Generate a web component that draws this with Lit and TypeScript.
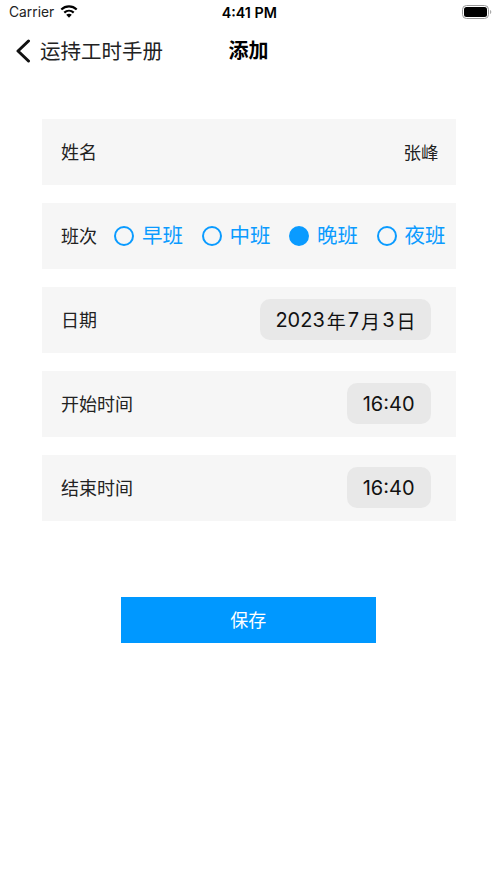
import { LitElement, html, css } from "lit";
import { customElement } from "lit/decorators.js";

const shifts = [
  { label: "早班", on: false },
  { label: "中班", on: false },
  { label: "晚班", on: true },
  { label: "夜班", on: false },
];

@customElement("app-root")
export class AppRoot extends LitElement {
  static styles = css`
    :host {
      display: block;
      width: 497px;
      height: 883px;
      background: #fff;
      color: #222;
      font-family: Inter, "Noto Sans CJK SC", sans-serif;
      overflow: hidden;
    }
    .status {
      height: 24px;
      display: grid;
      grid-template-columns: 1fr auto 1fr;
      align-items: center;
      padding: 0 5.5px 0 9px;
      color: #000;
    }
    .status-left { display: flex; align-items: center; gap: 6px; font-size: 13.8px; color: #222; }
    .wifi { margin-top: -1px; }
    .time { font-size: 14.3px; font-weight: 600; margin-left: -2px; }
    .status-right { display: flex; justify-content: flex-end; }
    .nav {
      height: 54px;
      display: grid;
      grid-template-columns: minmax(0, 1fr) auto minmax(0, 1fr);
      align-items: center;
      padding: 0 15px;
    }
    .back { display: flex; align-items: center; gap: 9px; font-size: 20.5px; color: #222; white-space: nowrap; }
    .back span { padding-bottom: 3px; }
    .title { font-size: 20px; font-weight: 700; color: #000; padding-bottom: 3px; }
    .form {
      margin: 41px 41.5px 0 42px;
      display: flex;
      flex-direction: column;
      gap: 18px;
    }
    .row {
      height: 66px;
      box-sizing: border-box;
      background: #f6f6f6;
      display: flex;
      align-items: center;
      justify-content: space-between;
      padding: 0 25px 2px 19px;
      font-size: 18px;
      color: #222;
    }
    .row.name { padding-right: 17px; }
    .value { font-size: 17.5px; }
    .row.shift { padding: 0 10px 0 19px; }
    .row.shift > span { padding-bottom: 2px; }
    .options { display: flex; gap: 18.5px; }
    .opt { display: flex; align-items: center; gap: 8px; color: #0a9bff; font-size: 20.5px; line-height: 28px; }
    .opt-label { padding-bottom: 1px; }
    .radio {
      width: 20px;
      height: 20px;
      box-sizing: border-box;
      border: 2px solid #0a9bff;
      border-radius: 50%;
    }
    .radio.on { background: #0a9bff; }
    .pill {
      height: 41px;
      box-sizing: border-box;
      background: #e8e8e8;
      border-radius: 10px;
      display: flex;
      align-items: center;
      padding: 2px 16px 0;
      font-size: 20px;
      color: #111;
      white-space: nowrap;
    }
    .pill.date { gap: 2px; padding: 2px 15px 0; }
    .pill.date .cjk { font-size: 19px; }
    .save {
      display: block;
      width: 254.5px;
      height: 46px;
      margin: 76px 0 0 121px;
      border: 0;
      padding: 0 0 2px;
      background: #0098ff;
      color: #fff;
      font: inherit;
      font-size: 18px;
    }
  `;

  render() {
    return html`
      <div class="status">
        <div class="status-left">
          <span>Carrier</span>
          <svg class="wifi" width="18" height="13" viewBox="0 0 18 13">
            <path d="M1.300 4.500C5.700.4 12.300.4 16.700 4.500" fill="none" stroke="#000" stroke-width="2.200"/>
            <path d="M4.300 7.600c2.700-2.500 6.700-2.500 9.400 0" fill="none" stroke="#000" stroke-width="2.200"/>
            <path d="M6.200 9.800c1.700-1.400 3.900-1.400 5.600 0L9 12.800z" fill="#000"/>
          </svg>
        </div>
        <div class="time">4:41 PM</div>
        <div class="status-right">
          <svg width="30" height="14" viewBox="0 0 30 14">
            <rect x="0.500" y="0.500" width="26" height="13" rx="4" fill="none" stroke="#999"/>
            <rect x="2" y="2" width="23" height="10" rx="2.500" fill="#000"/>
            <path d="M28 5v4c.8-.3 1.300-1.100 1.300-2s-.5-1.700-1.300-2z" fill="#aaa"/>
          </svg>
        </div>
      </div>
      <div class="nav">
        <div class="back">
          <svg width="16" height="24" viewBox="0 0 16 24">
            <path d="M13.500 2 3 12l10.500 10" fill="none" stroke="#111" stroke-width="3" stroke-linecap="round" stroke-linejoin="round"/>
          </svg>
          <span>运持工时手册</span>
        </div>
        <div class="title">添加</div>
        <div></div>
      </div>
      <div class="form">
        <div class="row name"><span>姓名</span><span class="value">张峰</span></div>
        <div class="row shift">
          <span>班次</span>
          <div class="options">
            ${shifts.map(
              (s) => html`<div class="opt"><span class="radio ${s.on ? "on" : ""}"></span><span class="opt-label">${s.label}</span></div>`
            )}
          </div>
        </div>
        <div class="row">
          <span>日期</span>
          <div class="pill date"><span>2023</span><span class="cjk">年</span><span>7</span><span class="cjk">月</span><span>3</span><span class="cjk">日</span></div>
        </div>
        <div class="row"><span>开始时间</span><div class="pill">16:40</div></div>
        <div class="row"><span>结束时间</span><div class="pill">16:40</div></div>
      </div>
      <button class="save">保存</button>
    `;
  }
}
